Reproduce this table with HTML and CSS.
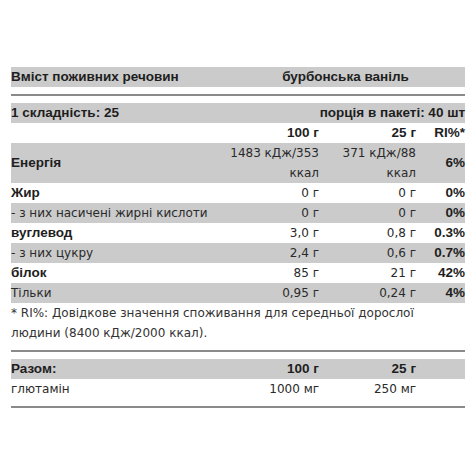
FILE: index.html
```html
<!DOCTYPE html>
<html lang="uk">
    <head>
        <meta charset="UTF-8" />
        <meta name="viewport" content="width=device-width, initial-scale=1.0" />
        <title>Вміст поживних речовин</title>
        <link rel="stylesheet" href="styles.css">
    </head>
    <body>
        <section class="facts">
            <!-- шапка -->
            <table class="tbl">
                <colgroup>
                    <col class="c-name"><col class="c-100"><col class="c-25"><col class="c-ri">
                </colgroup>
                <tr class="gray bold">
                    <td>Вміст поживних речовин</td>
                    <td colspan="3" class="mid">бурбонська ваніль</td>
                </tr>
            </table>
            <hr class="rule">

            <!-- основна таблиця -->
            <table class="tbl">
                <colgroup>
                    <col class="c-name"><col class="c-100"><col class="c-25"><col class="c-ri">
                </colgroup>
                <tr class="gray bold">
                    <td>1 складність: 25</td>
                    <td colspan="3" class="num">порція в пакеті: 40 шт</td>
                </tr>
                <tr class="bold">
                    <td></td>
                    <td class="num">100 г</td>
                    <td class="num">25 г</td>
                    <td class="num">RI%*</td>
                </tr>
                <tr class="gray">
                    <td class="bold">Енергія</td>
                    <td class="num">1483 кДж/353<br>ккал</td>
                    <td class="num">371 кДж/88<br>ккал</td>
                    <td class="num bold">6%</td>
                </tr>
                <tr>
                    <td class="bold">Жир</td>
                    <td class="num">0 г</td>
                    <td class="num">0 г</td>
                    <td class="num bold">0%</td>
                </tr>
                <tr class="gray">
                    <td>- з них насичені жирні кислоти</td>
                    <td class="num">0 г</td>
                    <td class="num">0 г</td>
                    <td class="num bold">0%</td>
                </tr>
                <tr>
                    <td class="bold">вуглевод</td>
                    <td class="num">3,0 г</td>
                    <td class="num">0,8 г</td>
                    <td class="num bold">0.3%</td>
                </tr>
                <tr class="gray">
                    <td>- з них цукру</td>
                    <td class="num">2,4 г</td>
                    <td class="num">0,6 г</td>
                    <td class="num bold">0.7%</td>
                </tr>
                <tr>
                    <td class="bold">білок</td>
                    <td class="num">85 г</td>
                    <td class="num">21 г</td>
                    <td class="num bold">42%</td>
                </tr>
                <tr class="gray">
                    <td>Тільки</td>
                    <td class="num">0,95 г</td>
                    <td class="num">0,24 г</td>
                    <td class="num bold">4%</td>
                </tr>
            </table>
            <p class="note">* RI%: Довідкове значення споживання для середньої дорослої людини (8400 кДж/2000 ккал).</p>
            <hr class="rule">

            <!-- додатково -->
            <table class="tbl">
                <colgroup>
                    <col class="c-name"><col class="c-100"><col class="c-25"><col class="c-ri">
                </colgroup>
                <tr class="gray bold">
                    <td>Разом:</td>
                    <td class="num">100 г</td>
                    <td class="num">25 г</td>
                    <td></td>
                </tr>
                <tr>
                    <td>глютамін</td>
                    <td class="num">1000 мг</td>
                    <td class="num">250 мг</td>
                    <td></td>
                </tr>
            </table>
            <hr class="rule">
        </section>
    </body>
</html>
```

FILE: styles.css
```css
html,
body {
    margin: 0;
    padding: 0;
    background: #fff;
}

body {
    color: #2a2a2a;
    font-family: "DejaVu Sans", Verdana, sans-serif;
    font-size: 12px;
    line-height: 20px;
}

/* общий блок */
.facts {
    width: 454px;
    margin: 0 0 0 11px;
    padding-top: 67px;
}

.tbl {
    width: 100%;
    border-collapse: collapse;
    table-layout: fixed;
}

.tbl td {
    padding: 0;
    height: 20px;
    vertical-align: middle;
}

.c-name { width: 215px; }
.c-100 { width: 93px; }
.c-25 { width: 97px; }
.c-ri { width: 49px; }

.gray {
    background: #cbcbcb;
}

/* жирный текст - другой шрифт */
.bold {
    font-family: "Liberation Sans", Arial, sans-serif;
    font-size: 13.5px;
    font-weight: bold;
    line-height: 20px;
    color: #1e1e1e;
}

.num {
    text-align: right;
}

.mid {
    text-align: center;
}

/* разделитель */
.rule {
    border: 0;
    border-top: 2px solid #8a8a8a;
    margin: 7px 0;
}

.note {
    margin: 0;
    color: #333;
}
```
